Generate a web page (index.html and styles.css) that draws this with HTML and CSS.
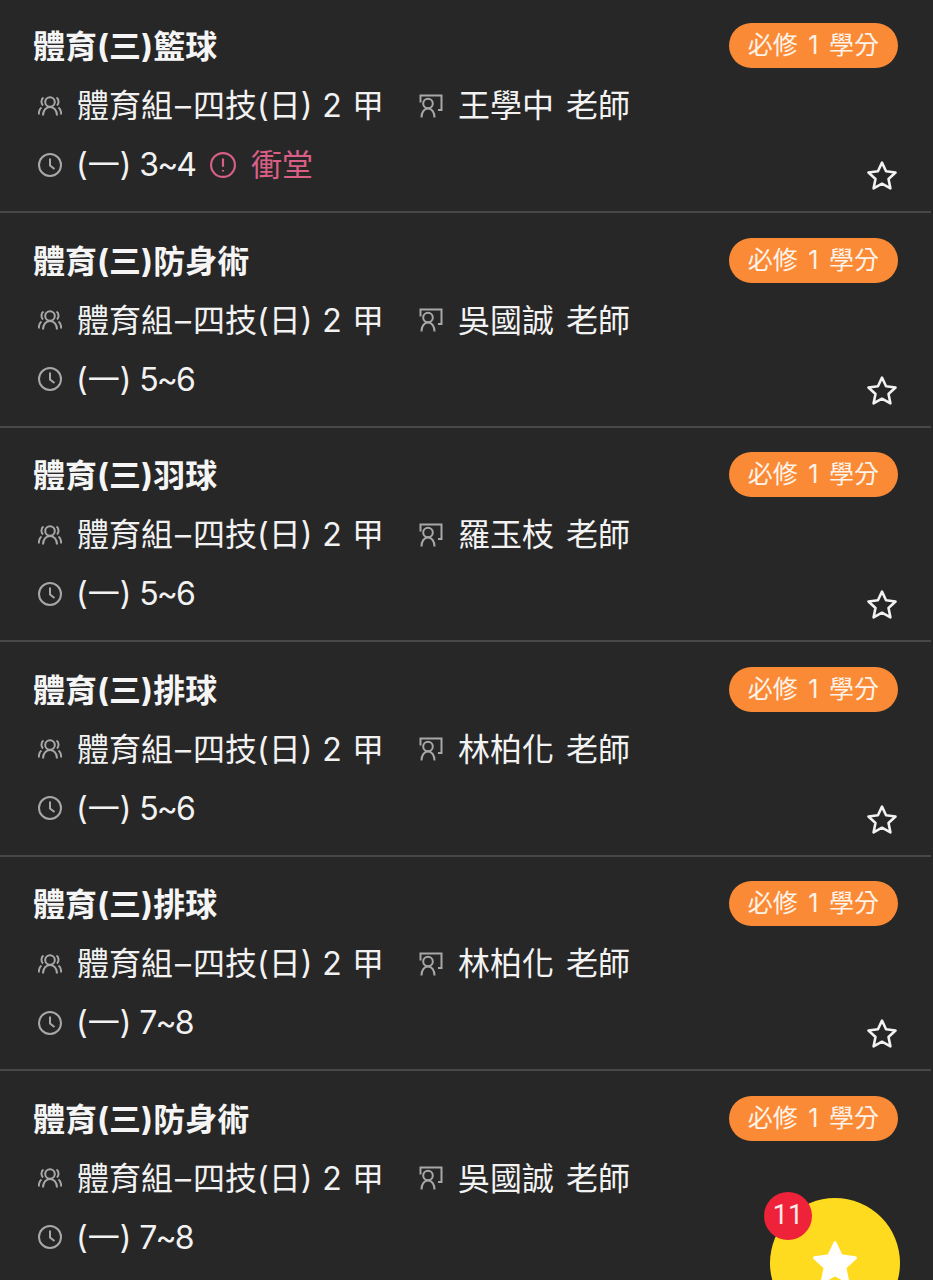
FILE: index.html
```html
<!DOCTYPE html>
<html lang="zh-Hant">
<head>
    <meta charset="UTF-8">
    <meta name="viewport" content="width=device-width, initial-scale=1.0">
    <title>課程列表</title>
    <link rel="stylesheet" href="styles.css">
</head>
<body>
    <svg class="icon-defs" aria-hidden="true">
        <symbol id="i-group" viewBox="0 0 24 24">
            <circle cx="12" cy="8" r="4.800"/>
            <path d="M5 21.500c0-5 3-8.500 7-8.500s7 3.500 7 8.500"/>
            <path d="M5.500 3.500C3 5 2.800 9.500 5 11.500M3.500 13.500C1.500 15 .8 18 .8 20.500"/>
            <path d="M18.500 3.500c2.500 1.500 2.700 6 .5 8M20.500 13.500c2 1.500 2.700 4.500 2.700 7"/>
        </symbol>
        <symbol id="i-teacher" viewBox="0 0 24 24">
            <path d="M1.500 8.500V1.500h21V16H19"/>
            <circle cx="9" cy="9.500" r="4.800"/>
            <path d="M2.500 23.500c0-5 2.500-9 6.500-9s6.500 4 6.500 9"/>
        </symbol>
        <symbol id="i-clock" viewBox="0 0 24 24">
            <circle cx="12" cy="12" r="11"/>
            <path d="M12 5.500V12.500L16.500 16"/>
        </symbol>
        <symbol id="i-alert" viewBox="0 0 24 24">
            <circle cx="12" cy="12" r="11"/>
            <path d="M12 6v7.500M12 16.500v1.500"/>
        </symbol>
        <symbol id="i-star" viewBox="0 0 30 30">
            <path d="M15 2.500l3.800 8.100 8.900 1.100-6.600 6.100 1.800 8.800L15 22.200l-7.900 4.400 1.800-8.800-6.600-6.100 8.900-1.100z"/>
        </symbol>
    </svg>

    <main class="course-list">
        <article class="course">
            <div class="course-info">
                <h2 class="course-name">體育(三)籃球</h2>
                <div class="course-meta">
                    <span class="meta-class"><svg class="icon"><use href="#i-group"/></svg>體育組<i class="dash">–</i>四技(日) 2 甲</span>
                    <span class="meta-teacher"><svg class="icon"><use href="#i-teacher"/></svg>王學中 老師</span>
                </div>
                <div class="course-meta">
                    <span class="meta-time"><svg class="icon"><use href="#i-clock"/></svg>(一) <i class="period">3~4</i></span>
                    <span class="conflict"><svg class="icon icon-alert"><use href="#i-alert"/></svg>衝堂</span>
                </div>
            </div>
            <div class="course-side">
                <span class="credit">必修 1 學分</span>
                <svg class="star"><use href="#i-star"/></svg>
            </div>
        </article>

        <article class="course">
            <div class="course-info">
                <h2 class="course-name">體育(三)防身術</h2>
                <div class="course-meta">
                    <span class="meta-class"><svg class="icon"><use href="#i-group"/></svg>體育組<i class="dash">–</i>四技(日) 2 甲</span>
                    <span class="meta-teacher"><svg class="icon"><use href="#i-teacher"/></svg>吳國誠 老師</span>
                </div>
                <div class="course-meta">
                    <span class="meta-time"><svg class="icon"><use href="#i-clock"/></svg>(一) <i class="period">5~6</i></span>
                </div>
            </div>
            <div class="course-side">
                <span class="credit">必修 1 學分</span>
                <svg class="star"><use href="#i-star"/></svg>
            </div>
        </article>

        <article class="course">
            <div class="course-info">
                <h2 class="course-name">體育(三)羽球</h2>
                <div class="course-meta">
                    <span class="meta-class"><svg class="icon"><use href="#i-group"/></svg>體育組<i class="dash">–</i>四技(日) 2 甲</span>
                    <span class="meta-teacher"><svg class="icon"><use href="#i-teacher"/></svg>羅玉枝 老師</span>
                </div>
                <div class="course-meta">
                    <span class="meta-time"><svg class="icon"><use href="#i-clock"/></svg>(一) <i class="period">5~6</i></span>
                </div>
            </div>
            <div class="course-side">
                <span class="credit">必修 1 學分</span>
                <svg class="star"><use href="#i-star"/></svg>
            </div>
        </article>

        <article class="course">
            <div class="course-info">
                <h2 class="course-name">體育(三)排球</h2>
                <div class="course-meta">
                    <span class="meta-class"><svg class="icon"><use href="#i-group"/></svg>體育組<i class="dash">–</i>四技(日) 2 甲</span>
                    <span class="meta-teacher"><svg class="icon"><use href="#i-teacher"/></svg>林柏化 老師</span>
                </div>
                <div class="course-meta">
                    <span class="meta-time"><svg class="icon"><use href="#i-clock"/></svg>(一) <i class="period">5~6</i></span>
                </div>
            </div>
            <div class="course-side">
                <span class="credit">必修 1 學分</span>
                <svg class="star"><use href="#i-star"/></svg>
            </div>
        </article>

        <article class="course">
            <div class="course-info">
                <h2 class="course-name">體育(三)排球</h2>
                <div class="course-meta">
                    <span class="meta-class"><svg class="icon"><use href="#i-group"/></svg>體育組<i class="dash">–</i>四技(日) 2 甲</span>
                    <span class="meta-teacher"><svg class="icon"><use href="#i-teacher"/></svg>林柏化 老師</span>
                </div>
                <div class="course-meta">
                    <span class="meta-time"><svg class="icon"><use href="#i-clock"/></svg>(一) <i class="period">7~8</i></span>
                </div>
            </div>
            <div class="course-side">
                <span class="credit">必修 1 學分</span>
                <svg class="star"><use href="#i-star"/></svg>
            </div>
        </article>

        <article class="course">
            <div class="course-info">
                <h2 class="course-name">體育(三)防身術</h2>
                <div class="course-meta">
                    <span class="meta-class"><svg class="icon"><use href="#i-group"/></svg>體育組<i class="dash">–</i>四技(日) 2 甲</span>
                    <span class="meta-teacher"><svg class="icon"><use href="#i-teacher"/></svg>吳國誠 老師</span>
                </div>
                <div class="course-meta">
                    <span class="meta-time"><svg class="icon"><use href="#i-clock"/></svg>(一) <i class="period">7~8</i></span>
                </div>
            </div>
            <div class="course-side">
                <span class="credit">必修 1 學分</span>
            </div>
        </article>
    </main>

    <button class="fab">
        <span class="fab-count">11</span>
        <svg class="fab-star"><use href="#i-star"/></svg>
    </button>
</body>
</html>
```

FILE: styles.css
```css
html, body {
    height: 100%;
}
body {
    position: relative;
    margin: 0;
    height: 1280px;
    overflow: hidden;
    background-color: #272727;
    color: #f2f2f2;
    font-family: "Inter", "Noto Sans CJK TC", sans-serif;
}
.icon-defs {
    display: none;
}
.course-list {
    margin: -1.400px 2px 0 0;
}
.course {
    display: flex;
    justify-content: space-between;
    box-sizing: border-box;
    height: 214.5px;
    padding: 24.400px 33px 19px 33px;
    border-bottom: 2px solid #484848;
}
.course-name {
    margin: 0 0 5.500px;
    font-size: 32px;
    font-weight: 700;
    line-height: 48px;
    color: #f5f5f5;
}
.course-meta {
    display: flex;
    align-items: center;
    height: 59px;
    padding-left: 5px;
    font-size: 32px;
    line-height: 48px;
}
.course-meta span {
    display: flex;
    align-items: center;
    white-space: pre;
}
.meta-class {
    width: 381px;
    word-spacing: 1px;
}
.meta-teacher {
    word-spacing: 3px;
}
.meta-time {
    margin-right: 15px;
    word-spacing: -1px;
}
.meta-time .icon {
    margin-right: 14px;
}
.period {
    font-style: normal;
    letter-spacing: -2px;
}
.dash {
    margin: 0 2px;
    font-style: normal;
}
.icon {
    flex: none;
    width: 24px;
    height: 24px;
    margin: -1px 15px 0 0;
    fill: none;
    stroke: #a8a8a8;
    stroke-width: 2;
}
.icon-alert {
    width: 26px;
    height: 26px;
    margin-right: 15px;
    stroke: #d95f85;
}
.conflict {
    color: #d95f85;
    font-size: 31px;
}
.course-side {
    display: flex;
    flex-direction: column;
    align-items: flex-end;
    justify-content: space-between;
}
.credit {
    margin-top: 0;
    padding: 0 19px;
    height: 45px;
    border-radius: 23px;
    background-color: #fb8a36;
    color: #fdf3e8;
    font-size: 25px;
    line-height: 45px;
    word-spacing: 3.500px;
    white-space: nowrap;
}
.star {
    width: 32px;
    height: 32px;
    fill: none;
    stroke: #f2f2f2;
    stroke-width: 2.4;
    stroke-linejoin: round;
}
.fab {
    position: absolute;
    left: 770px;
    top: 1198px;
    width: 130px;
    height: 130px;
    padding: 0;
    border: none;
    border-radius: 50%;
    background-color: #ffdb1f;
}
.fab-count {
    position: absolute;
    left: -6px;
    top: -6px;
    width: 48px;
    height: 48px;
    border-radius: 50%;
    background-color: #ee2238;
    color: #fbeaea;
    font-family: "Roboto", sans-serif;
    font-size: 27px;
    line-height: 46px;
    text-align: center;
}
.fab-star {
    position: absolute;
    left: 41px;
    top: 41px;
    width: 48px;
    height: 48px;
    fill: #fff;
    stroke: #fff;
    stroke-width: 2;
    stroke-linejoin: round;
}
```
